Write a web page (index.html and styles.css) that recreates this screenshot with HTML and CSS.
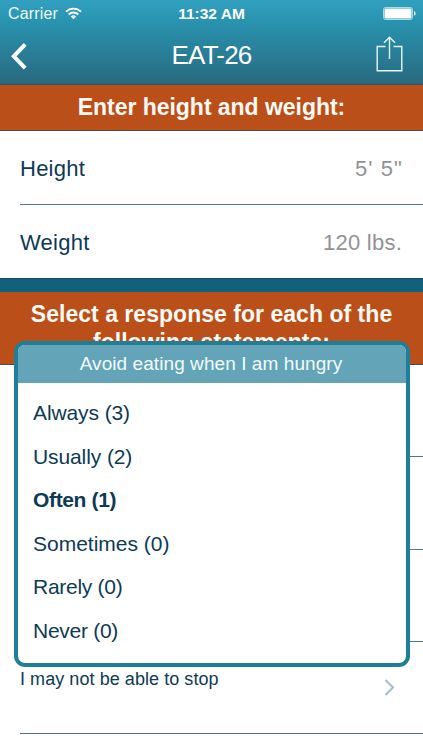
FILE: index.html
```html
<!DOCTYPE html>
<html lang="en">
<head>
<meta charset="utf-8">
<title>EAT-26</title>
<link rel="stylesheet" href="styles.css">
</head>
<body>
<div class="screen">
  <header class="top">
    <div class="status">
      <div class="carrier"><span>Carrier</span>
        <svg width="17" height="13" viewBox="0 0 17 13" fill="none" stroke="#fff" stroke-width="1.9"><path d="M1 4.7a10.6 10.6 0 0 1 15 0M3.7 7.5a6.8 6.8 0 0 1 9.6 0"/><path d="M8.5 12.2 5.8 9.5a3.8 3.8 0 0 1 5.4 0z" fill="#fff" stroke="none"/></svg>
      </div>
      <div class="time">11:32 AM</div>
      <div class="battery"><svg width="33" height="14" viewBox="0 0 33 14"><rect x=".5" y=".5" width="29" height="12" rx="2" fill="none" stroke="#a9dbe8"/><rect x="1.5" y="1.5" width="27" height="10" rx="1" fill="#fff"/><path d="M31 4.2q1.6.5 1.6 2.3T31 8.8z" fill="#fff"/></svg></div>
    </div>
    <nav class="nav">
      <svg class="back" width="16" height="27" viewBox="0 0 16 27" fill="none" stroke="#fff" stroke-width="4"><path d="M14.2 1.4 2.8 13.3 14.2 25.2"/></svg>
      <h1>EAT-26</h1>
      <svg class="share" width="27" height="36" viewBox="0 0 27 36" fill="none" stroke="#e4f7fa" stroke-width="1.4"><path d="M9.5 10.5H1.2v24.2h24.6V10.5h-8.3M13.5 23V2M8 6.8l5.5-5.5L19 6.8"/></svg>
    </nav>
  </header>
  <h2 class="banner">Enter height and weight:</h2>
  <section class="fields">
    <div class="field"><span class="label">Height</span><span class="value feet">5' 5"</span></div>
    <div class="field"><span class="label">Weight</span><span class="value">120 lbs.</span></div>
  </section>
  <h2 class="banner second">Select a response for each of the<br>following statements:</h2>
  <section class="questions">
    <div class="question"></div>
    <div class="question"></div>
    <div class="question"></div>
    <div class="question">
      <p>Have gone on eating binges where I feel that<br>I may not be able to stop</p>
      <svg class="chevron" width="11" height="17" viewBox="0 0 11 17" fill="none" stroke="#a3bec7" stroke-width="2"><path d="M1.5 1 9 8.5 1.5 16"/></svg>
    </div>
  </section>
  <div class="popup">
    <h3>Avoid eating when I am hungry</h3>
    <ul>
      <li>Always (3)</li>
      <li>Usually (2)</li>
      <li class="selected">Often (1)</li>
      <li class="wide">Sometimes (0)</li>
      <li class="tight">Rarely (0)</li>
      <li class="tight">Never (0)</li>
    </ul>
  </div>
</div>
</body>
</html>
```
FILE: styles.css
```css
* { box-sizing: border-box; margin: 0; padding: 0; }
body { font-family: "Liberation Sans", Arial, sans-serif; color: #0d3a56; background: #fff; }
.screen { position: relative; width: 423px; height: 750px; overflow: hidden; }
.top { height: 85px; background: linear-gradient(#31a0bf, #2994b0 25%, #28697f); border-bottom: 1px solid #454f4f; color: #fff; }
.status { height: 27px; display: grid; grid-template-columns: 1fr auto 1fr; align-items: center; font-size: 16px; line-height: 27px; }
.carrier { display: flex; align-items: center; gap: 7px; padding-left: 8px; letter-spacing: .15px; color: #eefbfd; }
.time { font-weight: bold; font-size: 15.5px; }
.battery { display: flex; justify-content: flex-end; padding-right: 7px; }
.nav { height: 57px; display: flex; align-items: center; justify-content: space-between; padding: 0 20px 0 11px; }
.nav h1 { font-size: 26px; font-weight: normal; letter-spacing: -.8px; line-height: 54px; height: 56px; margin-left: 20px; }
.back { margin-top: 1px; }
.share { margin-top: -4px; }
.banner { height: 46px; background: #bb4f19; border-bottom: 1px solid #59494b; color: #fffaf4; font-size: 23px; letter-spacing: -.04px; line-height: 44px; text-align: center; }
.fields { height: 148px; padding-left: 20px; border-bottom: 1px solid #194b64; }
.field { height: 74px; display: flex; align-items: center; justify-content: space-between; padding-right: 21px; font-size: 22px; }
.field:first-child { height: 73px; padding-top: 2px; }
.label { letter-spacing: .25px; }
.field + .field { border-top: 1px solid #53758c; padding-top: 2px; }
.value { color: #929296; letter-spacing: .25px; }
.value.feet { letter-spacing: 1.1px; margin-right: -1px; }
.second { height: 86px; border-top: 13px solid #0e6379; padding-top: 8px; line-height: 28px; letter-spacing: .03px; }
.question { height: 92.25px; margin-left: 20px; border-bottom: 1px solid #53758c; display: flex; justify-content: space-between; align-items: flex-start; }
.question p { padding-top: 4px; font-size: 18px; letter-spacing: .06px; line-height: 22px; white-space: nowrap; }
.chevron { margin: 37px 28px 0 0; flex: none; }
.popup { position: absolute; left: 14px; top: 341px; width: 396px; height: 326px; border: 4px solid #1f7f99; border-radius: 11px; background: #fff; overflow: hidden; }
.popup h3 { height: 38px; background: #63a4b9; color: #f2fbfd; font-size: 19px; font-weight: normal; letter-spacing: .07px; line-height: 37px; padding-right: 2px; text-align: center; }
.popup ul { list-style: none; padding: 8px 0 0 15px; }
.popup li { height: 43.6px; line-height: 43.6px; font-size: 21px; letter-spacing: -.1px; }
.popup .wide { letter-spacing: 0; }
.popup .tight { letter-spacing: -.28px; }
.popup .selected { font-weight: bold; letter-spacing: -.35px; }
```
